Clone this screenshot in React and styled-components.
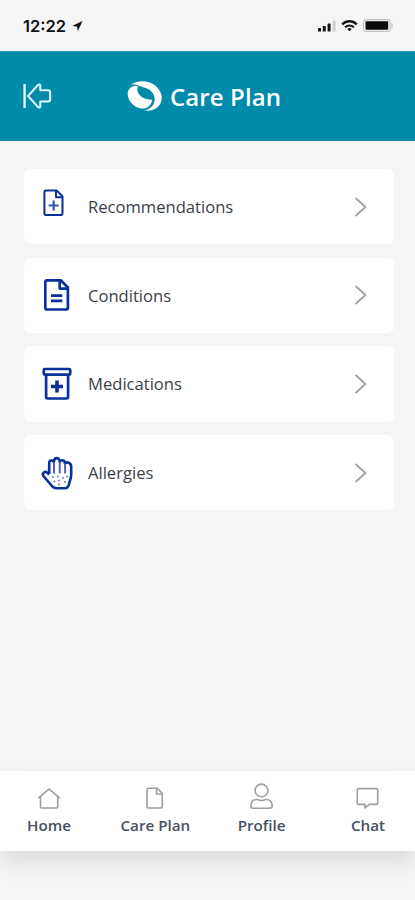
import React from 'react'
import styled, { createGlobalStyle } from 'styled-components'

const GlobalStyle = createGlobalStyle`
  body {
    margin: 0;
    background: #f5f5f5;
    font-family: 'Open Sans', 'Noto Sans', sans-serif;
  }
  svg {
    display: block;
    flex-shrink: 0;
    fill: none;
    stroke-linejoin: round;
  }
`

const Screen = styled.div`
  display: flex;
  flex-direction: column;
  width: 415px;
  height: 900px;
  overflow: hidden;
  background: #f5f5f5;
`

const StatusBar = styled.div`
  box-sizing: border-box;
  display: flex;
  align-items: center;
  justify-content: space-between;
  height: 51px;
  padding: 0 21px 0 23px;
  color: #111;
`

const Clock = styled.div`
  display: flex;
  align-items: center;
  gap: 6px;
  font-family: Inter, sans-serif;
  font-size: 16.5px;
  font-weight: 600;
  line-height: 20px;
`

const StatusIcons = styled.div`
  display: flex;
  align-items: center;
  gap: 5px;
`

const Header = styled.header`
  box-sizing: border-box;
  display: flex;
  align-items: center;
  height: 90px;
  padding: 0 22px;
  background: #008baa;
  border-top: 1px solid #2798b1;
  color: #fff;
`

const BackButton = styled.button`
  width: 30px;
  margin-right: 75px;
  padding: 0 0 1px;
  border: 0;
  background: none;
  color: #e0fbff;
`

const Title = styled.h1`
  display: flex;
  align-items: center;
  gap: 6px;
  margin: 0;
  font-size: 24px;
  font-weight: 600;
  line-height: 36px;
  letter-spacing: 0.1px;
  white-space: nowrap;
`

const List = styled.main`
  flex: 1;
  display: flex;
  flex-direction: column;
  gap: 13.5px;
  padding: 28px 21px 0 24px;
`

const Card = styled.div`
  box-sizing: border-box;
  display: flex;
  align-items: center;
  height: 75.2px;
  padding: 0 26px 0 16px;
  border-radius: 7px;
  background: #fff;
`

const CardIcon = styled.div`
  box-sizing: border-box;
  width: 34px;
  margin-right: 14px;
  padding-left: ${(props) => (props.$small ? 3 : 0)}px;
  padding-bottom: ${(props) => (props.$small ? 8 : 0)}px;
  color: #08319a;
`

const CardLabel = styled.div`
  flex: 1;
  padding-top: 1px;
  color: #3b3f48;
  font-size: 16.6px;
  line-height: 22px;
`

const NavBar = styled.nav`
  box-sizing: border-box;
  display: flex;
  justify-content: center;
  height: 80.5px;
  margin-bottom: 49px;
  padding-left: 2px;
  background: #fff;
  box-shadow: 0 12px 20px rgba(0, 0, 0, 0.1);
`

const NavItem = styled.div`
  display: flex;
  flex-direction: column;
  align-items: center;
  flex-shrink: 0;
  width: 106.3px;
  padding-top: 11px;
  color: #9a9f9f;
`

const NavLabel = styled.div`
  margin-top: 3px;
  color: #465063;
  font-size: 15.2px;
  font-weight: 600;
  line-height: 20px;
`

const LocationIcon = () => (
  <svg width="11" height="12" viewBox="0 0 11 12">
    <path d="M10.5 1 .5 5.8l4.6.9.7 4.6z" fill="currentColor" />
  </svg>
)

const SignalIcon = () => (
  <svg width="18" height="12" viewBox="0 0 18 12">
    <g fill="#161616">
      <rect x="0" y="8" width="3" height="3.5" rx=".6" />
      <rect x="4.8" y="6" width="3" height="5.5" rx=".6" />
      <rect x="9.6" y="3.5" width="3" height="8" rx=".6" />
    </g>
    <rect x="14.6" y=".5" width="3" height="11" rx=".6" fill="#cfcfcf" />
  </svg>
)

const WifiIcon = () => (
  <svg width="17" height="12" viewBox="0 0 17 12" stroke="#161616">
    <path d="M1.2 4.3a10.4 10.4 0 0 1 14.6 0" strokeWidth="2.4" />
    <path d="M4 7.3a6.4 6.4 0 0 1 9 0" strokeWidth="2.1" />
    <path d="m8.5 11.3 2.2-2.2a3.2 3.2 0 0 0-4.4 0z" fill="#161616" stroke="none" />
  </svg>
)

const BatteryIcon = () => (
  <svg width="31" height="13" viewBox="0 0 31 13">
    <rect x=".6" y=".6" width="26.6" height="11.8" rx="2.5" stroke="#c4c4c4" strokeWidth="1.2" />
    <rect x="2.5" y="2.3" width="22.7" height="8.4" rx="1" fill="#0b0b0b" />
    <path d="M28.2 4c2 .6 2.4 4.2 0 5z" fill="#c4c4c4" />
  </svg>
)

const BackIcon = () => (
  <svg width="30" height="26" viewBox="0 0 30 26" stroke="currentColor" strokeWidth="2">
    <path d="M2.6 1v24" strokeWidth="2.4" />
    <path d="M6 13 16 2c1-1 2.3-.6 2.3.7v4.5h7.8c1.2 0 2 .8 2 2v7.4c0 1.2-.8 2-2 2h-7.8v4.7c0 1.3-1.3 1.7-2.3.7z" />
  </svg>
)

const Logo = () => (
  <svg width="37" height="31" viewBox="0 0 37 31">
    <g fill="#fff">
      <path d="M6.6 5.2C2.6 6.4.4 9.6.7 13.3c.5 7.3 6.4 13.5 13.9 14.2 5.6.5 9.9-3.2 10.5-8.8-6 .2-12.4-2.2-14.3-7.9-.6-1.9-.5-3.9.1-5.6-1.5-.7-3-.6-4.3 0z" />
      <path d="M4 3.7C10.4-.8 20.5-1 27.5 4.1c6.8 5 9.3 13.2 5.3 19.3-3.2 4.9-9.3 7-15.6 6.3 7-1.5 10.8-6.3 10.5-12-.4-6-4.9-9.9-10.8-11.3-3.4-.8-5.6-2-8.2-2.6C7 3.4 5.3 3.3 4 3.7z" />
    </g>
  </svg>
)

const RecommendationsIcon = () => (
  <svg width="22" height="28" viewBox="0 0 22 28" stroke="currentColor" strokeWidth="2">
    <path d="M3.2 1.6h10.6l5.7 5.6v17c0 1.2-.6 1.8-1.8 1.8H3.2c-1.2 0-1.8-.6-1.8-1.8V3.4c0-1.2.6-1.8 1.8-1.8z" />
    <path d="M13 1.9v6.3h6.3" />
    <path d="M10.7 11.5v10M5.7 16.5h10" stroke="#3158ad" strokeWidth="2.2" />
  </svg>
)

const ConditionsIcon = () => (
  <svg width="34" height="34" viewBox="-4 -1 34 34" stroke="currentColor" strokeWidth="2.7">
    <path d="M3.3 1.3h13.4l7.2 7.2v20c0 1.2-.8 2-2 2H3.3c-1.2 0-2-.8-2-2V3.3c0-1.2.8-2 2-2z" />
    <path d="M15.7 1.6v8h8" />
    <path d="M7 16.7h11.3M7 21.9h11.3" strokeWidth="2.8" />
  </svg>
)

const MedicationsIcon = () => (
  <svg width="34" height="34" viewBox="0 0 34 34" stroke="currentColor" strokeWidth="2.7">
    <rect x="3.8" y="2" width="26.4" height="5.6" rx="1" />
    <path d="M6.1 7.6v22.2c0 1 .7 1.7 1.7 1.7h18.6c1 0 1.7-.7 1.7-1.7V7.6" />
    <path d="M17 13.5v12M11 19.5h12" strokeWidth="3.6" />
  </svg>
)

const AllergiesIcon = () => (
  <svg width="34" height="34" viewBox="0 0 34 34" stroke="currentColor">
    <path
      d="M9.2 18V7c0-3 4-3.2 4.6-.8 0-5.4 6-5.4 6-.2.6-2.6 5.2-2.2 5.2 1.5 1.4-2 6.2-1.3 6.2 3.2v7.9c0 4-1.4 6-2 8.8-.5 3.3-2 4.9-4.5 4.9h-8.2c-2.8 0-4.4-1.8-6.2-4.3L3.5 20.2c-2-3.2 1.6-5.6 3.9-3.3l1.8 1.8"
      strokeWidth="2.6"
    />
    <path d="M14 6v11.5M19.7 6v11.5M25.1 7.5v10" strokeWidth="1.9" stroke="#4560b2" />
    <g fill="#6c83c2" stroke="none">
      <circle cx="13" cy="21" r="1" />
      <circle cx="18" cy="20.5" r="1" />
      <circle cx="23" cy="22" r="1" />
      <circle cx="27" cy="20.5" r="1" />
      <circle cx="14.5" cy="25.5" r="1" />
      <circle cx="19" cy="24.5" r="1" />
      <circle cx="25" cy="26" r="1" />
      <circle cx="19" cy="28.5" r="1" />
    </g>
  </svg>
)

const Chevron = () => (
  <svg width="14" height="22" viewBox="0 0 14 22" stroke="#a2a7a7" strokeWidth="2">
    <path d="m1.5 2 10 9-10 9" />
  </svg>
)

const NavIcon = ({ children }) => (
  <svg width="30" height="30" viewBox="0 0 30 30" stroke="currentColor" strokeWidth="1.6">
    {children}
  </svg>
)

const items = [
  { label: 'Recommendations', icon: <RecommendationsIcon />, small: true },
  { label: 'Conditions', icon: <ConditionsIcon /> },
  { label: 'Medications', icon: <MedicationsIcon /> },
  { label: 'Allergies', icon: <AllergiesIcon /> },
]

const tabs = [
  {
    label: 'Home',
    icon: <path d="M4.2 16.2 15 7.2l10.8 9M6.5 14.5v10.3c0 .7.4 1.2 1.2 1.2h14.8c.7 0 1.2-.5 1.2-1.2V14.5" />,
  },
  {
    label: 'Care Plan',
    icon: (
      <>
        <path d="M8.7 6.3h8.6l5 5.2v12.8c0 1-.7 1.7-1.7 1.7H8.7c-1 0-1.7-.7-1.7-1.7V8c0-1 .7-1.7 1.7-1.7z" />
        <path d="M16.5 6.5V12H22" />
      </>
    ),
  },
  {
    label: 'Profile',
    icon: (
      <>
        <circle cx="14.5" cy="8.5" r="6.4" />
        <path d="M10.5 17.5c2.7 1.4 5.3 1.4 8 0 4.2-.3 6.7 2.2 6.7 6 0 1.7-.8 2.7-2.5 2.7H6.3c-1.7 0-2.5-1-2.5-2.7 0-3.8 2.5-6.3 6.7-6z" />
      </>
    ),
  },
  {
    label: 'Chat',
    icon: <path d="M6 6.6h17c1 0 1.7.7 1.7 1.7v12.4c0 1-.7 1.7-1.7 1.7h-6.6L12 25.9v-3.5H6c-1 0-1.7-.7-1.7-1.7V8.3c0-1 .7-1.7 1.7-1.7z" />,
  },
]

const App = () => {
  return (
    <Screen>
      <GlobalStyle />
      <StatusBar>
        <Clock>
          12:22
          <LocationIcon />
        </Clock>
        <StatusIcons>
          <SignalIcon />
          <WifiIcon />
          <BatteryIcon />
        </StatusIcons>
      </StatusBar>
      <Header>
        <BackButton aria-label="Back">
          <BackIcon />
        </BackButton>
        <Title>
          <Logo />
          Care Plan
        </Title>
      </Header>
      <List>
        {items.map((item) => (
          <Card key={item.label}>
            <CardIcon $small={item.small}>{item.icon}</CardIcon>
            <CardLabel>{item.label}</CardLabel>
            <Chevron />
          </Card>
        ))}
      </List>
      <NavBar>
        {tabs.map((tab) => (
          <NavItem key={tab.label}>
            <NavIcon>{tab.icon}</NavIcon>
            <NavLabel>{tab.label}</NavLabel>
          </NavItem>
        ))}
      </NavBar>
    </Screen>
  )
}

export default App
